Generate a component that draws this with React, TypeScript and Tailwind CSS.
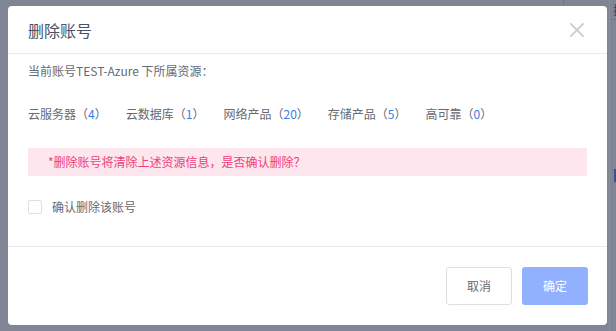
import { useState } from 'react'

const resources = [
  { name: '云服务器', count: 4 },
  { name: '云数据库', count: 1 },
  { name: '网络产品', count: 20 },
  { name: '存储产品', count: 5 },
  { name: '高可靠', count: 0 },
]

export default function App() {
  const [checked, setChecked] = useState(false)

  return (
    <div
      className="relative w-[616px] h-[331px] overflow-hidden bg-[#7f8594]"
      style={{ fontFamily: '"Noto Sans CJK SC", "Noto Sans", sans-serif' }}
    >
      {/* 背景页面（被遮罩压暗） */}
      <div className="flex h-full">
        <div className="flex-1 flex flex-col">
          <div className="h-[6px] flex justify-end">
            <div className="w-px h-full bg-[#737988] mr-[45px]" />
          </div>
        </div>
        <div className="w-[7px] border-l border-[#8a8f9c] flex flex-col">
          <div className="h-[20px] border-b border-[#737988] text-[12px] leading-[20px] text-[#3c4150] pl-[3px] overflow-hidden whitespace-nowrap">
            拉
          </div>
          <div className="mt-[149px] ml-[4px] h-[13px] bg-[#3d5186]" />
        </div>
      </div>

      {/* 弹窗 */}
      <div className="absolute left-[8px] top-[6px] w-[599px] h-[319px] bg-white rounded-[4px] flex flex-col">
        <div className="h-[48px] shrink-0 flex items-center justify-between pl-[20px] pr-[23px] border-b border-[#e8eaee]">
          <h2 className="text-[16px] leading-[20px] text-[#4b5165]">删除账号</h2>
          <button className="w-[14px] h-[14px] flex items-center justify-center">
            <svg width="14" height="14" viewBox="0 0 14 14">
              <path d="M1 1 L13 13 M13 1 L1 13" stroke="#cfd1d6" strokeWidth="2" strokeLinecap="square" />
            </svg>
          </button>
        </div>

        <div className="flex-1 px-[20px] pt-[7px] text-[12px] text-[#666a73]">
          <p className="leading-[20px]">当前账号TEST-Azure 下所属资源：</p>

          <div className="mt-[23px] flex gap-[19px] leading-[20px]">
            {resources.map((r) => (
              <span key={r.name} className="whitespace-nowrap">
                {r.name}（<span className="text-[#3a7cf0]">{r.count}</span>）
              </span>
            ))}
          </div>

          <div className="mt-[24px] h-[28px] bg-[#fde6ee] flex items-center pl-[20px] text-[12px] text-[#f0407a]">
            *删除账号将清除上述资源信息，是否确认删除？
          </div>

          <label className="mt-[21px] flex items-center h-[20px] cursor-pointer">
            <span
              onClick={() => setChecked(!checked)}
              className="w-[14px] h-[14px] rounded-[2px] border border-[#dcdfe6] bg-white"
            />
            <span className="ml-[10px] text-[#666a73]">确认删除该账号</span>
          </label>
        </div>

        <div className="h-[79px] shrink-0 border-t border-[#e8eaee] flex items-center justify-end gap-[10px] pr-[19px]">
          <button className="w-[66px] h-[38px] rounded-[3px] border border-[#dcdfe6] bg-white text-[12px] text-[#666a73]">
            取消
          </button>
          <button className="w-[66px] h-[38px] rounded-[3px] bg-[#91b1ff] text-[12px] text-white">
            确定
          </button>
        </div>
      </div>
    </div>
  )
}
